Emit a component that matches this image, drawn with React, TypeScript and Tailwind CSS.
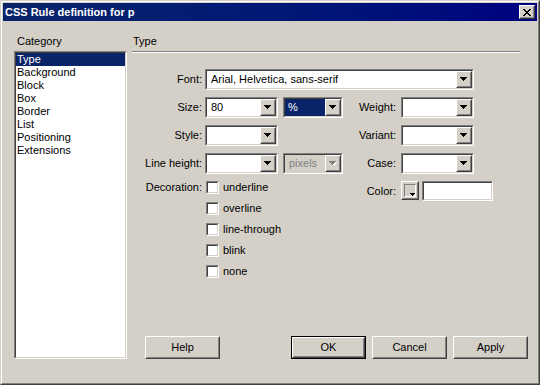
import React from 'react';

const Sunken: React.FC<{ className?: string; inner?: string; children?: React.ReactNode }> = ({ className = '', inner = '', children }) => (
    <div className={`border border-t-[#808080] border-l-[#808080] border-b-white border-r-white ${className}`}>
        <div className={`h-full w-full border border-t-[#404040] border-l-[#404040] border-b-[#d4d0c8] border-r-[#d4d0c8] ${inner}`}>
            {children}
        </div>
    </div>
);

const Raised: React.FC<{ className?: string; inner?: string; children?: React.ReactNode }> = ({ className = '', inner = '', children }) => (
    <div className={`border border-t-white border-l-white border-b-[#404040] border-r-[#404040] ${className}`}>
        <div className={`h-full w-full border border-t-[#d4d0c8] border-l-[#d4d0c8] border-b-[#808080] border-r-[#808080] bg-[#d4d0c8] ${inner}`}>
            {children}
        </div>
    </div>
);

const Arrow = ({ disabled }: { disabled?: boolean }) => (
    <svg width="8" height="5" viewBox="0 0 8 5" shapeRendering="crispEdges">
        {disabled && <path d="M2 1h6v1H2z M3 2h4v1H3z M4 3h2v1H4z M5 4h1v1H5z" fill="#ffffff" />}
        <path d="M0 0h7v1H0z M1 1h5v1H1z M2 2h3v1H2z M3 3h1v1H3z" fill={disabled ? '#808080' : '#000000'} />
    </svg>
);

interface ComboProps {
    width: string;
    text?: string;
    selected?: boolean;
    disabled?: boolean;
}

const Combo: React.FC<ComboProps> = ({ width, text, selected, disabled }) => (
    <Sunken className={`h-[21px] ${width}`} inner={`flex ${disabled ? 'bg-[#d4d0c8]' : 'bg-white'}`}>
        <div className="flex-1 flex items-center">
            {selected ? (
                <div className="h-full w-full bg-[#0a246a] text-white flex items-center pl-[3px]">{text}</div>
            ) : (
                <div className={`pl-[4px] whitespace-nowrap ${disabled ? 'text-[#808080]' : ''}`}>{text}</div>
            )}
        </div>
        <Raised className="w-[16px] h-full" inner="flex items-center justify-center">
            <Arrow disabled={disabled} />
        </Raised>
    </Sunken>
);

const Checkbox = ({ label }: { label: string }) => (
    <div className="flex items-center gap-[4px] h-[13px]">
        <Sunken className="w-[13px] h-[13px]" inner="bg-white" />
        <span>{label}</span>
    </div>
);

const categories = ['Type', 'Background', 'Block', 'Box', 'Border', 'List', 'Positioning', 'Extensions'];

const PushButton = ({ label, isDefault, className = '' }: { label: string; isDefault?: boolean; className?: string }) => (
    isDefault ? (
        <div className={`w-[75px] h-[23px] border border-black ${className}`}>
            <Raised className="h-full w-full" inner="flex items-center justify-center">{label}</Raised>
        </div>
    ) : (
        <Raised className={`w-[75px] h-[23px] ${className}`} inner="flex items-center justify-center">{label}</Raised>
    )
);

const App: React.FC = () => {
    return (
        <div className="w-[540px] h-[385px] bg-[#d4d0c8] border border-t-[#d4d0c8] border-l-[#d4d0c8] border-b-[#404040] border-r-[#404040] font-['Liberation_Sans',Arial,sans-serif] text-[11px] leading-[13px] text-black select-none">
            <div className="h-full border border-t-white border-l-white border-b-[#808080] border-r-[#808080] p-px flex flex-col">
                {/* title bar */}
                <div className="h-[18px] flex items-center justify-between pl-[2px] pr-[2px] bg-linear-to-r from-[#0a246a] to-[#000080]">
                    <span className="font-bold text-white">CSS Rule definition for p</span>
                    <Raised className="w-[16px] h-[14px]" inner="flex items-center justify-center">
                        <svg width="8" height="7" viewBox="0 0 8 7" shapeRendering="crispEdges">
                            <path d="M0 0h2v1H0z M6 0h2v1H6z M1 1h2v1H1z M5 1h2v1H5z M2 2h4v1H2z M3 3h2v1H3z M2 4h4v1H2z M1 5h2v1H1z M5 5h2v1H5z M0 6h2v1H0z M6 6h2v1H6z" fill="#000" />
                        </svg>
                    </Raised>
                </div>

                <div className="flex pl-[11px] pt-[14px]">
                    {/* category list */}
                    <div className="w-[113px] flex flex-col">
                        <div className="h-[13px] pl-[3px]">Category</div>
                        <Sunken className="mt-[3px] h-[308px] w-full" inner="bg-white">
                            {categories.map((c, i) => (
                                <div key={c} className={`h-[13px] pl-[1px] ${i === 0 ? 'bg-[#0a246a] text-white' : ''}`}>{c}</div>
                            ))}
                        </Sunken>
                    </div>

                    {/* type panel */}
                    <div className="ml-[5px] w-[397px] flex flex-col">
                        <div className="h-[13px] pl-[1px]">Type</div>
                        <div className="mt-[3px] w-[388px] h-[2px] border-t border-t-[#808080] border-b border-b-white" />

                        <div className="mt-[16px] flex flex-col gap-[7px]">
                            <div className="flex items-center h-[21px]">
                                <div className="w-[70px] text-right">Font:</div>
                                <div className="pl-[3px]">
                                    <Combo width="w-[269px]" text="Arial, Helvetica, sans-serif" />
                                </div>
                            </div>

                            <div className="flex items-center h-[21px]">
                                <div className="w-[70px] text-right">Size:</div>
                                <div className="w-[141px] pl-[3px] flex gap-[5px]">
                                    <Combo width="w-[73px]" text="80" />
                                    <Combo width="w-[60px]" text="%" selected />
                                </div>
                                <div className="w-[53px] text-right">Weight:</div>
                                <div className="pl-[5px]"><Combo width="w-[73px]" /></div>
                            </div>

                            <div className="flex items-center h-[21px]">
                                <div className="w-[70px] text-right">Style:</div>
                                <div className="w-[141px] pl-[3px] flex">
                                    <Combo width="w-[73px]" />
                                </div>
                                <div className="w-[53px] text-right">Variant:</div>
                                <div className="pl-[5px]"><Combo width="w-[73px]" /></div>
                            </div>

                            <div className="flex items-center h-[21px]">
                                <div className="w-[70px] text-right">Line height:</div>
                                <div className="w-[141px] pl-[3px] flex gap-[5px]">
                                    <Combo width="w-[73px]" />
                                    <Combo width="w-[60px]" text="pixels" disabled />
                                </div>
                                <div className="w-[53px] text-right">Case:</div>
                                <div className="pl-[5px]"><Combo width="w-[73px]" /></div>
                            </div>

                            <div className="flex items-start">
                                <div className="w-[70px] text-right h-[13px]">Decoration:</div>
                                <div className="w-[141px] pl-[4px] flex flex-col gap-[8px]">
                                    <Checkbox label="underline" />
                                    <Checkbox label="overline" />
                                    <Checkbox label="line-through" />
                                    <Checkbox label="blink" />
                                    <Checkbox label="none" />
                                </div>
                                <div className="w-[53px] h-[20px] flex items-center justify-end">Color:</div>
                                <div className="pl-[5px] flex gap-[3px]">
                                    <Raised className="w-[18px] h-[19px]" inner="flex items-end justify-end p-px">
                                        <div className="w-[12px] h-[13px] border border-t-[#808080] border-l-[#808080] border-b-white border-r-white flex items-end justify-end">
                                            <svg width="5" height="3" viewBox="0 0 5 3" shapeRendering="crispEdges">
                                                <path d="M0 0h5v1H0z M1 1h3v1H1z M2 2h1v1H2z" fill="#000" />
                                            </svg>
                                        </div>
                                    </Raised>
                                    <Sunken className="w-[71px] h-[20px]" inner="bg-white" />
                                </div>
                            </div>
                        </div>

                        <div className="mt-auto flex">
                            <PushButton label="Help" className="ml-[13px]" />
                            <PushButton label="OK" isDefault className="ml-[71px]" />
                            <PushButton label="Cancel" className="ml-[6px]" />
                            <PushButton label="Apply" className="ml-[6px]" />
                        </div>
                    </div>
                </div>
            </div>
        </div>
    );
};

export default App;
